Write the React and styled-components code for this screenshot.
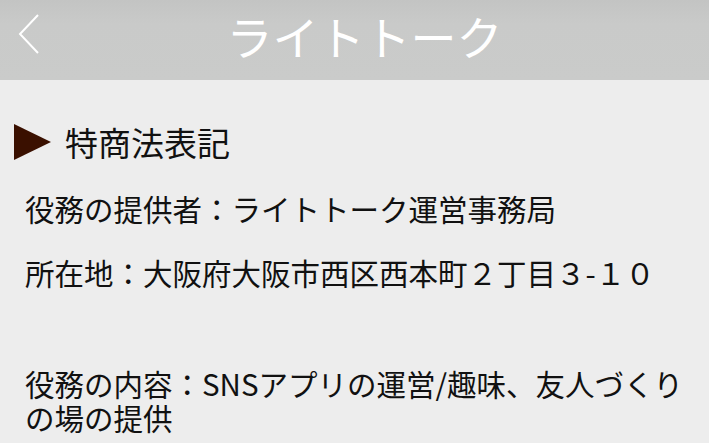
import React from "react";
import styled, { createGlobalStyle } from "styled-components";

const Global = createGlobalStyle`
  html, body { margin: 0; padding: 0; background: #ededed; }
  body { font-family: "Noto Sans CJK JP", "Noto Sans", sans-serif; color: #111; }
`;

const Page = styled.div`
  width: 709px;
  height: 443px;
  overflow: hidden;
  background: #ededed;
`;

const Header = styled.header`
  height: 80px;
  background: linear-gradient(#c3c4c3, #c9cac9 30%, #cacbca);
  display: flex;
  align-items: center;
  justify-content: center;
  position: relative;
`;

const Back = styled.button`
  position: absolute;
  left: 12px;
  top: 12px;
  width: 34px;
  height: 44px;
  padding: 0;
  border: 0;
  background: none;
  display: flex;
  align-items: center;
  justify-content: center;
`;

const Title = styled.h1`
  margin: 0;
  margin-left: 20px;
  margin-top: -10px;
  font-size: 46px;
  font-weight: 400;
  color: #fff;
  letter-spacing: 0;
`;

const Content = styled.main`
  padding: 42px 0 0 14px;
`;

const SectionTitle = styled.h2`
  margin: 0;
  display: flex;
  align-items: center;
  gap: 14px;
  font-size: 33px;
  font-weight: 400;
  line-height: 40px;
  color: #111;
`;

const Triangle = styled.span`
  width: 0;
  height: 0;
  border-top: 18px solid transparent;
  border-bottom: 18px solid transparent;
  border-left: 37px solid #3a1000;
`;

const Items = styled.div`
  padding-left: 11px;
  font-size: 29.5px;
  line-height: 34px;
`;

const Item = styled.p`
  margin: ${(p) => p.$top}px 0 0;
  padding-right: 20px;
`;

export default function App() {
  return (
    <Page>
      <Global />
      <Header>
        <Back aria-label="戻る">
          <svg width="34" height="44" viewBox="0 0 34 44">
            <polyline
              points="26,3 8,22 26,41"
              fill="none"
              stroke="#fff"
              strokeWidth="2"
            />
          </svg>
        </Back>
        <Title>ライトトーク</Title>
      </Header>
      <Content>
        <SectionTitle>
          <Triangle />
          特商法表記
        </SectionTitle>
        <Items>
          <Item $top={29}>役務の提供者：ライトトーク運営事務局</Item>
          <Item $top={30}>所在地：大阪府大阪市西区西本町２丁目３-１０</Item>
          <Item $top={77}>役務の内容：SNSアプリの運営/趣味、友人づくりの場の提供</Item>
        </Items>
      </Content>
    </Page>
  );
}
